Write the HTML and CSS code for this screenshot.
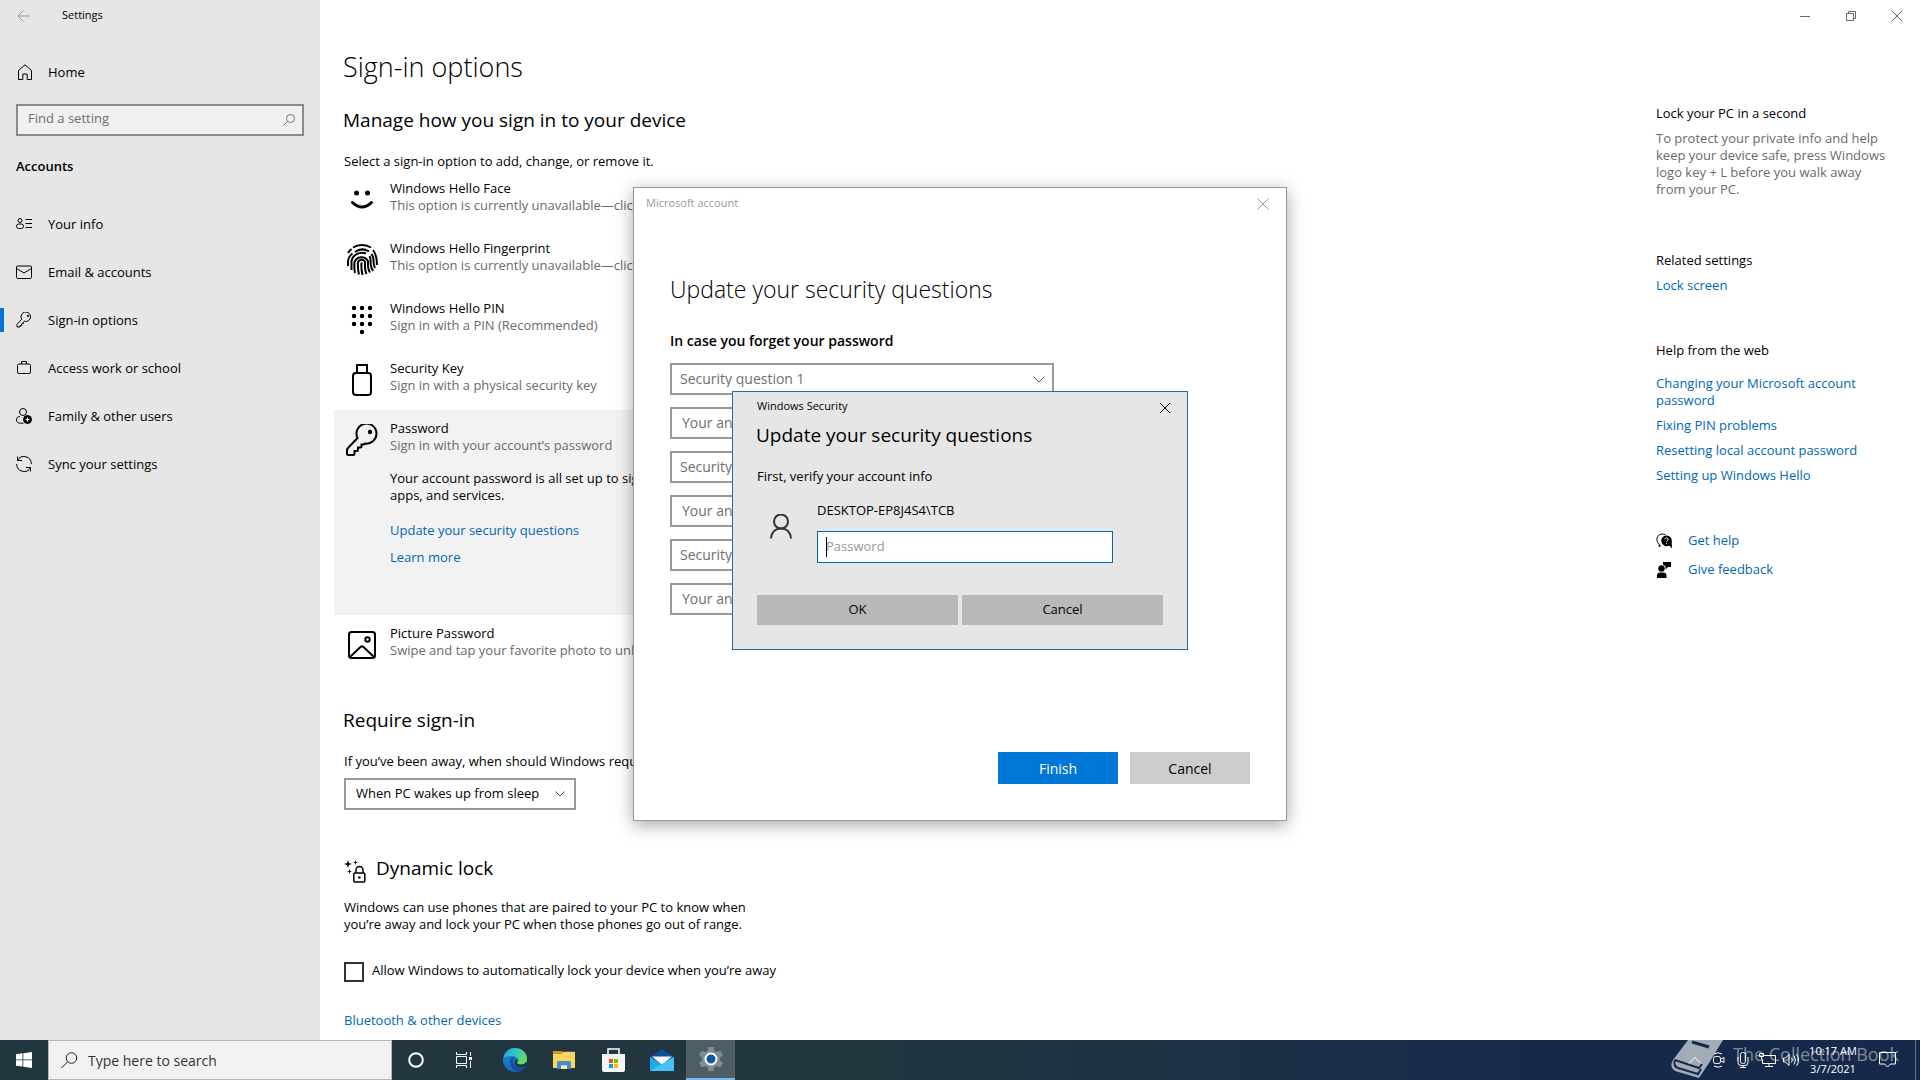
FILE: index.html
```html
<!DOCTYPE html>
<html lang="en">

<head>
  <meta charset="UTF-8" />
  <meta name="viewport" content="width=device-width, initial-scale=1.0" />
  <title>Settings</title>
  <link rel="stylesheet" href="styles.css">
</head>

<body>
  <div class="app">
    <!-- SIDEBAR -->
    <aside class="sidebar">
      <div class="title-bar">
        <button class="icon-btn back-btn" aria-label="Back">
          <svg width="14" height="14" viewBox="0 0 14 14"><path d="M13 7H1M6.500 1.500L1 7l5.500 5.500" /></svg>
        </button>
        <span>Settings</span>
      </div>
      <a href="#" class="nav-link home-link">
        <svg width="16" height="16" viewBox="0 0 16 16"><path d="M2.500 6.500L9 .8l6.500 5.700V15.500h-4.300V10H6.800v5.500H2.500z" /></svg>
        Home
      </a>
      <div class="search-box">
        <input type="text" placeholder="Find a setting" aria-label="Find a setting" />
        <svg width="12" height="12" viewBox="0 0 12 12"><circle cx="7.500" cy="4.500" r="4" /><path d="M4.600 7.400L.5 11.500" /></svg>
      </div>
      <h2 class="nav-title">Accounts</h2>
      <nav>
        <a href="#" class="nav-link">
          <svg width="16" height="16" viewBox="0 0 16 16"><circle cx="4" cy="4.500" r="2" /><rect x=".5" y="8" width="7" height="4.500" rx="2.200" /><path d="M9.500 3.500H16M9.500 7.500H16M9.500 11.500H16" /></svg>
          Your info
        </a>
        <a href="#" class="nav-link">
          <svg width="16" height="16" viewBox="0 0 16 16"><rect x=".5" y="2" width="15" height="12.500" rx="1" /><path d="M.5 4.500L8 9l7.500-4.500" /></svg>
          Email &amp; accounts
        </a>
        <a href="#" class="nav-link active">
          <svg width="16" height="16" viewBox="0 0 32 32" class="key"><path d="M2 27v3h6v-3h3v-3.500h3.500V20l2-1.500A9.500 9.500 0 1 0 11.500 14.500L1.500 25z" /><circle cx="24" cy="8" r="1.500" /></svg>
          Sign-in options
        </a>
        <a href="#" class="nav-link">
          <svg width="16" height="16" viewBox="0 0 16 16"><rect x="1.500" y="4" width="13" height="9.500" rx="1.500" /><path d="M5.500 4V1.500h5V4" /></svg>
          Access work or school
        </a>
        <a href="#" class="nav-link">
          <svg width="16" height="16" viewBox="0 0 16 16"><circle cx="7" cy="4" r="3.500" /><path d="M4 8.500C1 8.500.5 10.500.5 12c0 2 1.500 3.200 4 3.200h3" /><circle cx="11.500" cy="11.500" r="4" fill="#000" /><path d="M11.500 9.500v4M9.500 11.500h4" stroke="#fff" /></svg>
          Family &amp; other users
        </a>
        <a href="#" class="nav-link">
          <svg width="16" height="16" viewBox="0 0 16 16"><path d="M1.500 .5V4.500H6M1.500 4.500A7.300 7.300 0 0 1 15.300 8M14.500 15.500V11.500H10M14.500 11.500A7.300 7.300 0 0 1 .7 8" /></svg>
          Sync your settings
        </a>
      </nav>
    </aside>

    <!-- CONTENT -->
    <main class="content">
      <div class="options">
        <h1>Sign-in options</h1>
        <h2>Manage how you sign in to your device</h2>
        <p>Select a sign-in option to add, change, or remove it.</p>

        <ul class="signin-list">
          <li>
            <svg width="32" height="32" viewBox="0 0 32 32"><circle cx="10.500" cy="9" r="2.500" class="solid" /><circle cx="21.500" cy="9" r="2.500" class="solid" /><path d="M6.500 18.500Q16 27.500 25.500 18.500" stroke-width="3" stroke-linecap="round" /></svg>
            <div>
              <h3>Windows Hello Face</h3>
              <p class="muted">This option is currently unavailable—click to learn more</p>
            </div>
          </li>
          <li>
            <svg width="32" height="32" viewBox="0 0 32 32" class="finger">
              <path d="M7 3.500Q16-1.500 25 3.500M2 9Q3 7 5.500 5M9 8Q16 3 23 7.500M27 6Q31 11 31 21M2 22V17Q2.500 12.500 6.500 9.500M25.500 10Q28 13.500 27.500 18Q28 22 29 24" />
              <path d="M5.500 26V18A10.500 9.500 0 0 1 20 9.500M23.500 12Q25 15 24.500 19Q25 24 27 27M9 29Q8 24 8.500 18A7.500 7.500 0 0 1 22 17Q21.500 25 24 28.500M13 30.500Q11.500 25 12 18A4 4 0 0 1 19 17.500Q18.500 26 20.500 30M16.500 31Q15 25 15.500 18.500" />
            </svg>
            <div>
              <h3>Windows Hello Fingerprint</h3>
              <p class="muted">This option is currently unavailable—click to learn more</p>
            </div>
          </li>
          <li>
            <svg width="32" height="32" viewBox="0 0 32 32">
              <g class="solid">
                <circle cx="8" cy="4" r="2.200" /><circle cx="16" cy="4" r="2.200" /><circle cx="24" cy="4" r="2.200" />
                <circle cx="8" cy="12" r="2.200" /><circle cx="16" cy="12" r="2.200" /><circle cx="24" cy="12" r="2.200" />
                <circle cx="8" cy="20" r="2.200" /><circle cx="16" cy="20" r="2.200" /><circle cx="24" cy="20" r="2.200" />
                <circle cx="16" cy="28" r="2.200" />
              </g>
            </svg>
            <div>
              <h3>Windows Hello PIN</h3>
              <p class="muted">Sign in with a PIN (Recommended)</p>
            </div>
          </li>
          <li>
            <svg width="32" height="32" viewBox="0 0 32 32"><rect x="7" y="9" width="18" height="22" rx="3" /><path d="M11 9V1h10v8" /></svg>
            <div>
              <h3>Security Key</h3>
              <p class="muted">Sign in with a physical security key</p>
            </div>
          </li>
          <li class="selected">
            <svg width="32" height="32" viewBox="0 0 32 32"><path d="M1 28v1.500Q1 31 2.500 31H7q1.500 0 1.500-1.500V27H11q1 0 1-1V23.500h2.500q1 0 1-1V20.500h2L19 19.500A10 10 0 1 0 11.500 14L2 24Q1 25 1 26z" /><circle cx="24" cy="8" r="2.200" class="solid" /></svg>
            <div>
              <h3>Password</h3>
              <p class="muted">Sign in with your account’s password</p>
              <p class="detail">Your account password is all set up to sign in to Windows,<br>apps, and services.</p>
              <a href="#">Update your security questions</a>
              <a href="#">Learn more</a>
            </div>
          </li>
          <li>
            <svg width="32" height="32" viewBox="0 0 32 32"><rect x="3" y="3" width="26" height="26" rx="2.500" /><circle cx="21.500" cy="10.500" r="2.200" /><path d="M4 28L14.500 18q1.500-1.300 3 0L28 28" /></svg>
            <div>
              <h3>Picture Password</h3>
              <p class="muted">Swipe and tap your favorite photo to unlock your device</p>
            </div>
          </li>
        </ul>

        <h2>Require sign-in</h2>
        <label for="awaySelect" class="away-label">If you’ve been away, when should Windows require you to sign in again?</label>
        <div class="select-wrap away-select">
          <select id="awaySelect">
            <option>When PC wakes up from sleep</option>
            <option>Never</option>
          </select>
          <svg width="10" height="6" viewBox="0 0 10 6"><path d="M.5 .5L5 5 9.500 .5" /></svg>
        </div>

        <div class="lock-title">
          <svg width="24" height="24" viewBox="0 0 24 24">
            <rect x="9.800" y="13" width="11" height="9" rx="1" stroke-width="1.500" /><path d="M12 13v-3a3.500 3.500 0 0 1 7 0v3" stroke-width="1.500" /><circle cx="15.300" cy="17.500" r="1.300" class="solid" />
            <g class="solid"><path d="M4 0l1 3 3 1-3 1-1 3-1-3-3-1 3-1z" /><path d="M11.500 0l.6 1.900 1.900.6-1.900.6-.6 1.900-.6-1.900L9 2.500l1.900-.6z" /><path d="M5.500 9l.6 1.900 1.900.6-1.900.6-.6 1.900-.6-1.900-1.900-.6 1.900-.6z" /></g>
          </svg>
          <h2>Dynamic lock</h2>
        </div>
        <p>Windows can use phones that are paired to your PC to know when<br>you’re away and lock your PC when those phones go out of range.</p>
        <div class="check-row">
          <input type="checkbox" id="autoLock" />
          <label for="autoLock">Allow Windows to automatically lock your device when you’re away</label>
        </div>
        <a href="#">Bluetooth &amp; other devices</a>
      </div>

      <aside class="related">
        <section>
          <h3>Lock your PC in a second</h3>
          <p class="muted">To protect your private info and help keep your device safe, press Windows logo key + L before you walk away from your PC.</p>
        </section>
        <section>
          <h3>Related settings</h3>
          <a href="#">Lock screen</a>
        </section>
        <section class="web-help">
          <h3>Help from the web</h3>
          <a href="#">Changing your Microsoft account password</a>
          <a href="#">Fixing PIN problems</a>
          <a href="#">Resetting local account password</a>
          <a href="#">Setting up Windows Hello</a>
        </section>
        <div class="help-links">
          <a href="#">
            <svg width="16" height="16" viewBox="0 0 16 16"><path d="M5 12.500l-1.800 1.200V11A5.300 5.300 0 1 1 9.500 2" /><path class="solid" d="M10.500 2.500a5.300 5.300 0 1 0 2.700 9.900L15.800 15.500V8A5.300 5.300 0 0 0 10.500 2.500z" /><path d="M8.900 6.500a1.600 1.600 0 1 1 2.300 1.400q-.7.400-.7 1.200M10.500 10.200v1" stroke="#fff" /></svg>
            Get help
          </a>
          <a href="#">
            <svg width="16" height="16" viewBox="0 0 16 16" class="solid"><circle cx="5.500" cy="6.500" r="3.200" /><path d="M1 16v-2.500Q1 10.500 4 10.500h3.500q3 0 3 3V16zM7 0h8v5h-3l-2.500 2.500V5Q9 3 7 2.500z" /></svg>
            Give feedback
          </a>
        </div>
      </aside>
    </main>

    <div class="window-controls">
      <button class="icon-btn" aria-label="Minimize"><svg width="10" height="10" viewBox="0 0 10 10"><path d="M0 5.500h10" /></svg></button>
      <button class="icon-btn" aria-label="Restore"><svg width="10" height="10" viewBox="0 0 10 10"><path d="M.5 2.500h7v7h-7zM2.500 2.500v-2h7v7h-2" /></svg></button>
      <button class="icon-btn" aria-label="Close"><svg width="10" height="10" viewBox="0 0 10 10"><path d="M0 0l10 10M10 0L0 10" /></svg></button>
    </div>

    <!-- MICROSOFT ACCOUNT WINDOW -->
    <div class="overlay account-overlay">
      <div class="account-dialog" role="dialog" aria-label="Microsoft account">
        <div class="dialog-bar">
          <span>Microsoft account</span>
          <button class="icon-btn" aria-label="Close"><svg width="12" height="12" viewBox="0 0 12 12"><path d="M.5 .5l11 11M11.500 .5l-11 11" /></svg></button>
        </div>
        <form class="questions" onsubmit="event.preventDefault();">
          <h2>Update your security questions</h2>
          <h3>In case you forget your password</h3>
          <div class="select-wrap">
            <select aria-label="Security question 1"><option>Security question 1</option></select>
            <svg width="12" height="7" viewBox="0 0 12 7"><path d="M.5 .5L6 6 11.500 .5" /></svg>
          </div>
          <input type="text" placeholder="Your answer" aria-label="Answer 1" />
          <div class="select-wrap">
            <select aria-label="Security question 2"><option>Security question 2</option></select>
          </div>
          <input type="text" placeholder="Your answer" aria-label="Answer 2" />
          <div class="select-wrap">
            <select aria-label="Security question 3"><option>Security question 3</option></select>
          </div>
          <input type="text" placeholder="Your answer" aria-label="Answer 3" />
          <div class="dialog-actions">
            <button type="submit" class="primary">Finish</button>
            <button type="button">Cancel</button>
          </div>
        </form>
      </div>
    </div>

    <!-- WINDOWS SECURITY PROMPT -->
    <div class="overlay">
      <div class="security-dialog" role="dialog" aria-label="Windows Security">
        <div class="security-bar">
          <span>Windows Security</span>
          <button class="icon-btn" aria-label="Close"><svg width="12" height="12" viewBox="0 0 12 12"><path d="M1 1l10 10M11 1L1 11" /></svg></button>
        </div>
        <form onsubmit="event.preventDefault();">
          <h2>Update your security questions</h2>
          <p>First, verify your account info</p>
          <div class="credential">
            <svg width="24" height="26" viewBox="0 0 24 26"><circle cx="12" cy="7.500" r="7" /><path d="M2 24.500Q3 14.500 12 14.500T22 24.500" /></svg>
            <div class="credential-field">
              <label for="password">DESKTOP-EP8J4S4\TCB</label>
              <input type="password" id="password" placeholder="Password" />
            </div>
          </div>
          <div class="security-actions">
            <button type="submit">OK</button>
            <button type="button">Cancel</button>
          </div>
        </form>
      </div>
    </div>
  </div>

  <!-- TASKBAR -->
  <footer class="taskbar">
    <button class="task-btn" aria-label="Start">
      <svg width="16" height="16" viewBox="0 0 16 16"><path fill="#fff" d="M0 2.200l6.500-.9v6.200H0zM7.300 1.200L16 0v7.500H7.300zM0 8.300h6.500v6.300L0 13.700zM7.300 8.300H16V16l-8.700-1.300z" /></svg>
    </button>
    <div class="task-search">
      <svg width="17" height="17" viewBox="0 0 17 17"><circle cx="10.500" cy="6" r="5.300" /><path d="M6.700 9.800L.5 16" /></svg>
      <input type="text" placeholder="Type here to search" aria-label="Type here to search" />
    </div>
    <div class="task-apps">
      <button class="task-btn narrow" aria-label="Cortana">
        <svg width="16" height="16" viewBox="0 0 16 16"><circle cx="8" cy="8" r="6.800" stroke-width="2" /></svg>
      </button>
      <button class="task-btn narrow" aria-label="Task view">
        <svg width="17" height="16" viewBox="0 0 17 16"><path d="M.5 0v2.500h10V0M.5 16v-2.500h10V16M.5 4.500h10v7H.5zM14.500 0v4M14.500 9v7" /><path d="M13 5h3v3h-3z" fill="#fff" stroke="none" /></svg>
      </button>
    </div>
    <div class="task-apps">
      <button class="task-btn" aria-label="Microsoft Edge">
        <svg width="24" height="24" viewBox="0 0 24 24">
          <defs>
            <linearGradient id="edgeTop" x1="0" y1="0" x2="1" y2=".4"><stop offset="0" stop-color="#2aa5dc" /><stop offset=".5" stop-color="#2fc3c9" /><stop offset="1" stop-color="#62dd62" /></linearGradient>
            <linearGradient id="edgeSide" x1="0" y1="0" x2="0" y2="1"><stop offset="0" stop-color="#1b8fd6" /><stop offset="1" stop-color="#1265bd" /></linearGradient>
          </defs>
          <circle cx="12" cy="12" r="12" fill="url(#edgeSide)" />
          <path d="M.5 10C2 3.500 6.500 0 12 0c7 0 12 5 12 10.500 0 4-2.800 6-6 6-2.500 0-4-.8-4-1.800 0-.7 1-1.200 1-2.800 0-2.200-2.200-4-5.500-4C5 7.900 1 9 .5 10z" fill="url(#edgeTop)" />
          <path d="M9 9.500C5 13 8 22.500 15 23.500c3.500-.7 6-3 7.500-5.500-6 2.500-11.500.5-12.500-4-.3-1.800.2-3 1.500-4z" fill="#134f9c" />
          <path d="M14 14.700c0 1 1.500 1.800 4 1.800 2.200 0 4.200-1 5.200-2.800l.8 3-1.400 1.600C17 20.500 12 18.500 11.500 14.500c0-2 .8-3.300 2.500-3.300.7 0 1 .4 1 .8 0 1.600-1 2-1 2.700z" fill="#22363f" />
        </svg>
      </button>
      <button class="task-btn" aria-label="File Explorer">
        <svg width="22" height="18" viewBox="0 0 22 18"><path d="M0 0h9l2 2.500H0z" fill="#d9921b" /><path d="M0 2.500h9l1.500-1.800H22V17H0z" fill="#fcd462" /><path d="M4 18v-6.500Q4 10 5.500 10h11q1.500 0 1.500 1.500V18h-4v-3.500H8V18z" fill="#3f8ed0" /><path d="M8 14.500h6V18H8z" fill="#fce9a9" /></svg>
      </button>
      <button class="task-btn" aria-label="Microsoft Store">
        <svg width="24" height="24" viewBox="0 0 24 24"><path d="M7 6V1h11v5" fill="none" stroke="#fff" stroke-width="1.500" /><path d="M1 6h23v16q0 2-2 2H3q-2 0-2-2z" fill="#f5f5f5" /><path d="M8 11h4v4H8z" fill="#f25022" /><path d="M13 11h4v4h-4z" fill="#7fba00" /><path d="M8 16h4v4H8z" fill="#00a4ef" /><path d="M13 16h4v4h-4z" fill="#ffb900" /></svg>
      </button>
      <button class="task-btn" aria-label="Mail">
        <svg width="24" height="22" viewBox="0 0 24 22"><path d="M0 8L12 0l12 8v4H0z" fill="#0a4fa0" /><path d="M2 7.500h20L12 16z" fill="#f3f3f3" /><path d="M0 8l12 7.500L24 8v14H0z" fill="#26a7ea" /><path d="M0 22L24 8v14z" fill="#41c3f7" /></svg>
      </button>
      <button class="task-btn running" aria-label="Settings">
        <svg width="24" height="24" viewBox="0 0 24 24"><circle cx="12" cy="12" r="9" fill="#838c90" /><path d="M10 0.500h4l.5 3h-5zM10 23.500h4l.5-3h-5zM1 8l2-3.500 3 1.200L3.500 10zM23 8l-2-3.500-3 1.200L20.500 10zM1 16l2 3.500 3-1.200L3.500 14zM23 16l-2 3.500-3-1.200 2.500-4.300z" fill="#838c90" stroke="#838c90" stroke-width="1.500" stroke-linejoin="round" /><circle cx="12" cy="12" r="5.500" fill="#0f58a8" stroke="#fff" stroke-width="2" /></svg>
      </button>
    </div>

    <div class="tray">
      <div class="watermark">
        <svg width="52" height="40" viewBox="0 0 52 40"><path d="M17 0h35L38 23 28 38 4 31Q-2 27 2 20z" fill="#a3abb9" /><path d="M4 20l24 8 3-4M4 20q-2 6 3 8l20 6 3-5" fill="none" stroke="#17294a" stroke-width="2" /><path d="M21 2l17 5" stroke="#17294a" stroke-width="3" /></svg>
        <span>The Collection Book</span>
      </div>
      <button class="tray-btn" aria-label="Show hidden icons"><svg width="14" height="8" viewBox="0 0 14 8"><path d="M1 7.500L7 1.500l6 6" /></svg></button>
      <button class="tray-btn" aria-label="Meet now"><svg width="14" height="16" viewBox="0 0 14 16"><rect x="1.500" y="4.500" width="7" height="7" rx="2" /><path d="M9 7l3-1.500v5L9 9M2 2Q6-.5 10 2M2 14q4 2.500 8 0" /></svg></button>
      <button class="tray-btn" aria-label="Microphone"><svg width="14" height="16" viewBox="0 0 14 16"><rect x="4.500" y=".5" width="5" height="11" rx="2" /><path d="M2 5v5.500q0 3 3 3h4q3 0 3-3V5M7 13.500v2M4 15.500h6" /></svg></button>
      <button class="tray-btn" aria-label="Network"><svg width="17" height="16" viewBox="0 0 17 16"><path d="M5 3.500h11.500v8H3.500V7M10 11.500v3M6 14.500h8M.5 1.500h4v3h-4zM2.500 4.500v3" /></svg></button>
      <button class="tray-btn" aria-label="Volume"><svg width="17" height="14" viewBox="0 0 17 14"><path d="M.5 5h2L6 1.500v11L2.500 9h-2zM8.500 4.500q1.500 2.500 0 5M11 2.500q3 4.500 0 9M13.500 1q4 6 0 12" /></svg></button>
      <div class="clock">10:17 AM<br>3/7/2021</div>
      <button class="tray-btn action-center" aria-label="Action center"><svg width="17" height="16" viewBox="0 0 17 16"><path d="M.5 .5h16v11.500h-5L8.500 15 5.500 12h-5z" /></svg></button>
    </div>
  </footer>
</body>

</html>
```
FILE: styles.css
```css
* {
  box-sizing: border-box;
}

body {
  margin: 0;
  height: 100vh;
  display: flex;
  flex-direction: column;
  overflow: hidden;
  font-family: "Open Sans", sans-serif;
  font-size: 13px;
  line-height: 17px;
  color: #000;
  background-color: #fff;
}

h1,
h2,
h3,
p,
ul {
  margin: 0;
  padding: 0;
}

h1 {
  font-size: 27px;
  line-height: 36px;
  font-weight: 300;
}

h2 {
  font-size: 19px;
  line-height: 24px;
  font-weight: 400;
}

h3 {
  font-size: 13px;
  line-height: 17px;
  font-weight: 400;
}

a {
  color: #0067b8;
  text-decoration: none;
}

a:hover {
  color: #666;
}

button,
input,
select {
  font-family: inherit;
  font-size: inherit;
  line-height: inherit;
  color: inherit;
  border-radius: 0;
  margin: 0;
  outline: none;
}

svg {
  flex: none;
  fill: none;
  stroke: currentColor;
}

.solid {
  fill: #000;
  stroke: none;
}

.muted {
  color: #6a6a6a;
}

.icon-btn {
  display: flex;
  align-items: center;
  justify-content: center;
  padding: 0;
  border: none;
  background: none;
}

.app {
  position: relative;
  flex: 1;
  display: flex;
  min-height: 0;
  overflow: hidden;
}

/* sidebar */
.sidebar {
  width: 320px;
  flex: none;
  background-color: #e6e6e6;
}

.title-bar {
  display: flex;
  align-items: center;
  height: 32px;
  font-size: 11px;
}

.title-bar span,
.dialog-bar span {
  padding-bottom: 3px;
}

.back-btn {
  width: 48px;
  height: 32px;
  margin-right: 14px;
  color: #999;
}

.nav-link {
  display: flex;
  align-items: center;
  gap: 16px;
  height: 48px;
  padding-left: 16px;
  color: #000;
}

.home-link {
  margin: 16px 0 8px;
}

.nav-link.active {
  background: linear-gradient(#0078d7, #0078d7) left center / 4px 24px no-repeat;
}

.nav-link .key {
  stroke-width: 2;
}

.search-box {
  display: flex;
  align-items: center;
  height: 32px;
  margin: 0 16px;
  padding-right: 7px;
  border: 2px solid #8c8c8c;
  background-color: #f0f0f0;
  color: #777;
}

.search-box input {
  flex: 1;
  min-width: 0;
  padding: 0 0 4px 10px;
  border: none;
  background: none;
}

input::placeholder {
  color: #6f6f6f;
  opacity: 1;
}

.nav-title {
  margin: 18px 16px 22px;
  font-size: 13px;
  font-weight: 600;
}

/* content */
.content {
  flex: 1;
  display: flex;
  justify-content: space-between;
  min-width: 0;
}

.options {
  width: 620px;
  padding: 49px 0 0 24px;
}

.options > h1,
.options > h2 {
  margin-left: -1px;
}

.options > h1 {
  margin-bottom: 23px;
}

.options > h1 + h2 {
  margin-bottom: 21px;
}

.signin-list {
  list-style: none;
  margin: 0 0 33px -10px;
}

.signin-list li {
  display: flex;
  gap: 12px;
  min-height: 60px;
  padding: 10px 12px 0;
}

.signin-list svg {
  margin-top: 4px;
  stroke-width: 2;
}

.signin-list .selected {
  min-height: 205px;
  background-color: #f2f2f2;
}

.signin-list .detail {
  margin: 16px 0 18px;
}

.signin-list a {
  display: block;
  margin-bottom: 10px;
}

.away-label {
  display: block;
  margin: 21px 0 8px;
}

.select-wrap {
  position: relative;
  height: 32px;
}

.select-wrap select {
  width: 100%;
  height: 32px;
  padding: 0 30px 2px 10px;
  border: 2px solid #999;
  background-color: #fff;
  appearance: none;
}

.select-wrap svg {
  position: absolute;
  right: 11px;
  top: 13px;
  color: #555;
}

.away-select {
  width: 232px;
}

.lock-title {
  display: flex;
  align-items: flex-start;
  gap: 8px;
  margin: 46px 0 15px;
}

.lock-title svg {
  margin-top: 4px;
}

.check-row {
  display: flex;
  gap: 8px;
  margin: 29px 0 30px;
}

.check-row input {
  width: 20px;
  height: 20px;
  border: 2px solid #333;
  background-color: #fff;
  appearance: none;
}

.related {
  width: 264px;
  padding: 105px 28px 0 0;
}

.related section {
  display: flex;
  flex-direction: column;
  gap: 8px;
  margin-bottom: 54px;
}

.related section + section {
  margin-bottom: 48px;
}

.related .web-help h3 {
  margin-bottom: 8px;
}

.help-links {
  display: flex;
  flex-direction: column;
  gap: 12px;
}

.help-links a {
  display: flex;
  align-items: center;
  gap: 16px;
}

.help-links svg {
  color: #000;
}

.window-controls {
  position: absolute;
  top: 0;
  right: 0;
  display: flex;
  color: #666;
}

.window-controls .icon-btn {
  width: 46px;
  height: 32px;
}

/* windows over the page */
.overlay {
  position: absolute;
  inset: 0;
  display: flex;
  align-items: center;
  justify-content: center;
}

.account-overlay {
  padding-bottom: 32px;
}

.account-dialog {
  width: 654px;
  padding-bottom: 36px;
  border: 1px solid #999;
  background-color: #fff;
  box-shadow: 0 4px 16px rgba(0, 0, 0, 0.35);
}

.dialog-bar {
  display: flex;
  align-items: center;
  justify-content: space-between;
  height: 32px;
  padding-left: 12px;
  font-size: 11px;
  color: #999;
}

.dialog-bar .icon-btn {
  width: 46px;
  height: 32px;
}

.questions {
  display: flex;
  flex-direction: column;
  gap: 12px;
  padding: 53px 36px 0;
  font-size: 14px;
}

.questions h2 {
  font-size: 23px;
  line-height: 32px;
  font-weight: 300;
}

.questions h3 {
  margin-top: 14px;
  font-size: 14px;
  line-height: 20px;
  font-weight: 600;
}

.questions .select-wrap,
.questions > input {
  width: 384px;
}

.questions select {
  padding-left: 8px;
  color: #6f6f6f;
}

.questions .select-wrap svg {
  right: 9px;
}

.questions > input {
  height: 32px;
  padding: 0 10px 2px;
  border: 2px solid #999;
}

.dialog-actions {
  display: flex;
  justify-content: flex-end;
  gap: 12px;
  margin-top: 125px;
}

.dialog-actions button {
  width: 120px;
  height: 32px;
  border: none;
  background-color: #ccc;
}

.dialog-actions .primary {
  background-color: #0078d7;
  color: #fff;
}

.security-dialog {
  width: 456px;
  padding: 0 24px 24px;
  border: 1px solid #1a6fab;
  background-color: #e6e6e6;
}

.security-bar {
  display: flex;
  justify-content: space-between;
  margin-right: -24px;
  padding-top: 5px;
  font-size: 11px;
}

.security-bar .icon-btn {
  width: 44px;
  height: 22px;
}

.security-dialog h2 {
  margin: 4px 0 21px -1px;
}

.credential {
  display: flex;
  gap: 24px;
  margin: 17px 50px 32px 12px;
}

.credential svg {
  margin-top: 12px;
  stroke: #333;
  stroke-width: 2;
}

.credential-field {
  flex: 1;
  display: flex;
  flex-direction: column;
  gap: 12px;
}

/* the text cursor stands at the start of the field */
.credential-field input {
  width: 100%;
  height: 32px;
  padding: 0 8px 2px;
  border: 1px solid #0067b8;
  background: linear-gradient(#000, #000) 8px center / 1px 20px no-repeat #fff;
}

.credential-field input::placeholder {
  color: #999;
}

.security-actions {
  display: flex;
  gap: 4px;
}

.security-actions button {
  flex: 1;
  height: 30px;
  border: none;
  background-color: #b8b8b8;
}

/* taskbar */
.taskbar {
  display: flex;
  height: 40px;
  background: linear-gradient(90deg, #22363f 0%, #22363f 45%, #17294a 80%);
  color: #fff;
}

.task-btn {
  display: flex;
  align-items: center;
  justify-content: center;
  width: 49px;
  padding: 0;
  border: none;
  background: none;
}

.task-btn svg {
  stroke: none;
}

.task-btn.narrow {
  width: 48px;
}

.task-btn.narrow svg {
  stroke: #fff;
}

.task-btn.running {
  border-bottom: 2px solid #76b9ed;
  background-color: #4e5e65;
}

.taskbar > .task-btn {
  width: 48px;
}

.task-search {
  display: flex;
  align-items: center;
  gap: 10px;
  width: 344px;
  padding-left: 12px;
  border: 1px solid #b5b5b5;
  background-color: #f2f2f2;
  color: #222;
}

.task-search input {
  flex: 1;
  border: none;
  padding: 0;
  background: none;
  font-size: 14px;
}

.task-search input::placeholder {
  color: #333;
}

.task-apps {
  display: flex;
}

.task-apps + .task-apps {
  margin-left: 2px;
}

.tray {
  position: relative;
  display: flex;
  align-items: center;
  margin-left: auto;
  padding-right: 4px;
  border-right: 1px solid #66728a;
  margin-right: 4px;
}

.watermark {
  position: absolute;
  left: -12px;
  top: 0;
  display: flex;
  gap: 10px;
  font-size: 18px;
  line-height: 28px;
  color: #7f899b;
  white-space: nowrap;
}

.watermark svg {
  stroke: none;
}

.tray-btn {
  position: relative;
  display: flex;
  align-items: center;
  justify-content: center;
  width: 24px;
  height: 40px;
  padding: 0;
  border: none;
  background: none;
}

.tray-btn.action-center {
  width: 48px;
}

.clock {
  position: relative;
  width: 60px;
  font-size: 11px;
  line-height: 18px;
  text-align: center;
}
```
